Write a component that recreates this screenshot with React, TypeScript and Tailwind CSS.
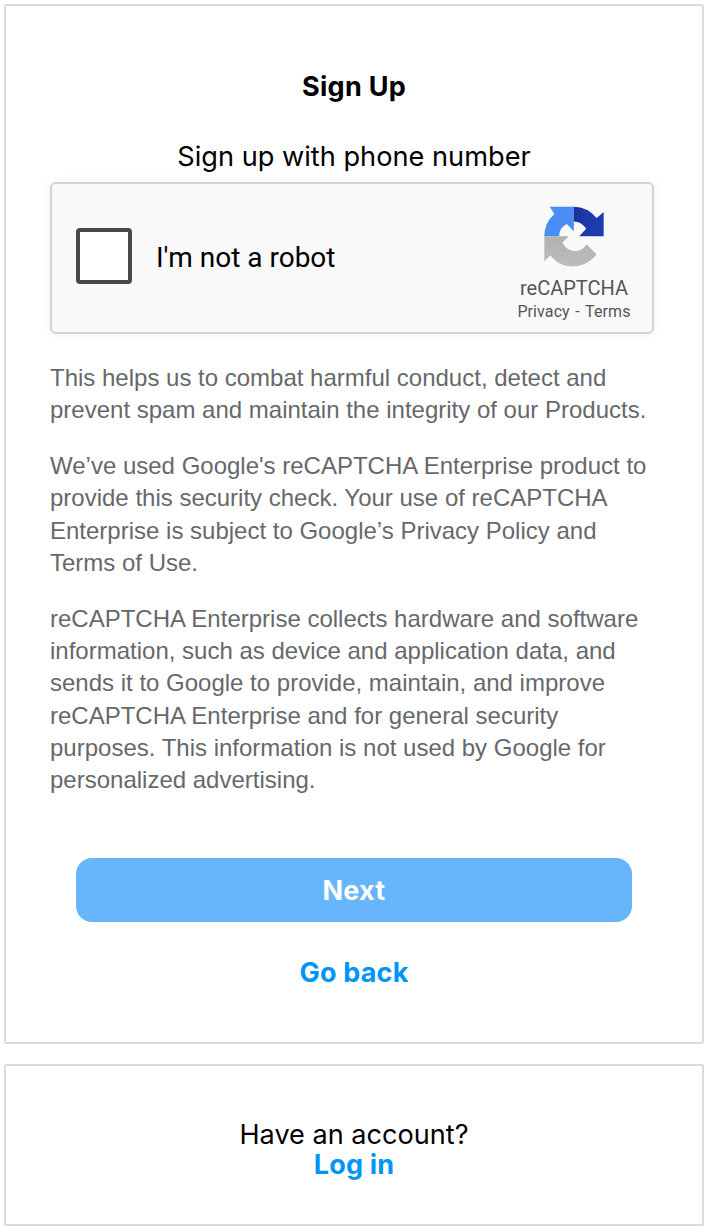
import React from 'react';

function RecaptchaLogo() {
  return (
    <svg viewBox="130 75 185 185" className="h-[62px] w-[62px]" aria-hidden="true">
      <defs>
        <linearGradient id="dark" x1="0" y1="0" x2="1" y2="0">
          <stop offset="0" stopColor="#18309a" />
          <stop offset="0.4" stopColor="#1c3aa9" />
          <stop offset="1" stopColor="#1c3cb0" />
        </linearGradient>
        <linearGradient id="gray" x1="0" y1="0" x2="0" y2="1">
          <stop offset="0" stopColor="#b2b2b2" />
          <stop offset="1" stopColor="#bcbcbc" />
        </linearGradient>
      </defs>
      <path d="M134 168A88 88 0 0 1 164 102L150 80H222V153L201 132Q178 143 178 168Z" fill="#4a8df5" />
      <path d="M222 80A88 88 0 0 1 290 114L311 96V168H238L259 146Q244 124 222 124Z" fill="url(#dark)" />
      <path d="M134 168H207L188 187C204 219 242 221 260 192L290 223C252 270 186 270 152 226L134 243Z" fill="url(#gray)" />
    </svg>
  );
}

function Line({ children }: { children: React.ReactNode }) {
  return <span className="block whitespace-nowrap">{children}</span>;
}

export default function App() {
  return (
    <main className="flex h-[1232px] w-[706px] flex-col gap-5 bg-white pl-1 pt-1 font-['Inter',sans-serif] text-black">
      <section className="flex h-[1040px] w-[700px] flex-col items-center rounded-[2px] border-2 border-[#dbdbdb] pt-[63px]">
        <h1 className="h-9 text-[27px] font-bold leading-9 tracking-[0.3px]">Sign Up</h1>
        <p className="mt-[34px] h-9 whitespace-nowrap text-[27.2px] leading-9">Sign up with phone number</p>
        <div className="ml-11 mt-[7px] flex h-[152px] w-[604px] shrink-0 items-center self-start rounded-[6px] border-2 border-[#d3d3d3] bg-[#f9f9f9] pl-6 font-['Roboto',sans-serif] shadow-[0_0_8px_2px_rgba(0,0,0,0.04)]">
          <button aria-label="I'm not a robot" className="mt-[-4px] size-14 shrink-0 rounded-[4px] border-4 border-[#484848] bg-white" />
          <span className="ml-6 whitespace-nowrap text-[28px] leading-9">I'm not a robot</span>
          <div className="ml-auto mr-5 flex h-full w-[116px] flex-col items-center pt-[21px] text-[#555]">
            <RecaptchaLogo />
            <span className="mt-[9px] text-[20px] leading-6">reCAPTCHA</span>
            <span className="mt-px whitespace-nowrap text-[16px] leading-[22px] tracking-[0.1px] [word-spacing:1.5px]">Privacy - Terms</span>
          </div>
        </div>
        <div className="ml-11 mt-[27.75px] flex w-[604px] flex-col gap-6 self-start font-['Liberation_Sans',sans-serif] text-[24px] leading-[32.2px] text-[#67686b]">
          <p>
            <Line>This helps us to combat harmful conduct, detect and</Line>
            <Line>prevent spam and maintain the integrity of our Products.</Line>
          </p>
          <p>
            <Line>We’ve used Google's reCAPTCHA Enterprise product to</Line>
            <Line>provide this security check. Your use of reCAPTCHA</Line>
            <Line>Enterprise is subject to Google’s Privacy Policy and</Line>
            <Line>Terms of Use.</Line>
          </p>
          <p>
            <Line>reCAPTCHA Enterprise collects hardware and software</Line>
            <Line>information, such as device and application data, and</Line>
            <Line>sends it to Google to provide, maintain, and improve</Line>
            <Line>reCAPTCHA Enterprise and for general security</Line>
            <Line>purposes. This information is not used by Google for</Line>
            <Line>personalized advertising.</Line>
          </p>
        </div>
        <button className="mt-[62px] h-16 w-[556px] shrink-0 rounded-2xl bg-[#67b5fa] pt-0.5 text-[27px] font-bold tracking-[0.2px] text-white">Next</button>
        <button className="mt-[33px] h-9 text-[27px] font-bold leading-9 tracking-[0.2px] text-[#0095f6]">Go back</button>
      </section>
      <section className="flex h-[162px] w-[700px] flex-col items-center rounded-[2px] border-2 border-[#dbdbdb] pt-[54px] text-[27.1px] leading-[30px]">
        <p>Have an account?</p>
        <a className="text-[27px] font-bold leading-[30px] tracking-[0.2px] text-[#0095f6]">Log in</a>
      </section>
    </main>
  );
}
